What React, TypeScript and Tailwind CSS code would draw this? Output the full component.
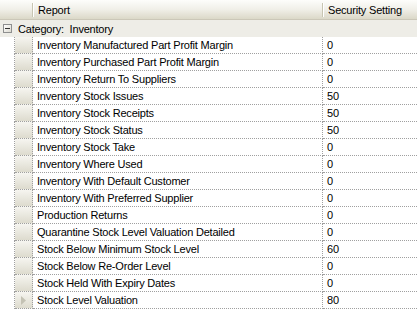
import React from "react";

type Row = { name: string; value: string };

const rows: Row[] = [
  { name: "Inventory Manufactured Part Profit Margin", value: "0" },
  { name: "Inventory Purchased Part Profit Margin", value: "0" },
  { name: "Inventory Return To Suppliers", value: "0" },
  { name: "Inventory Stock Issues", value: "50" },
  { name: "Inventory Stock Receipts", value: "50" },
  { name: "Inventory Stock Status", value: "50" },
  { name: "Inventory Stock Take", value: "0" },
  { name: "Inventory Where Used", value: "0" },
  { name: "Inventory With Default Customer", value: "0" },
  { name: "Inventory With Preferred Supplier", value: "0" },
  { name: "Production Returns", value: "0" },
  { name: "Quarantine Stock Level Valuation Detailed", value: "0" },
  { name: "Stock Below Minimum Stock Level", value: "60" },
  { name: "Stock Below Re-Order Level", value: "0" },
  { name: "Stock Held With Expiry Dates", value: "0" },
  { name: "Stock Level Valuation", value: "80" },
];

function HeaderDivider() {
  return (
    <div className="flex h-[14px] self-center">
      <div className="w-px bg-[#c7c5b2]" />
      <div className="w-px bg-white" />
    </div>
  );
}

export default function App() {
  return (
    <div
      className="w-[417px] h-[310px] overflow-hidden bg-white text-[11px] tracking-[-0.2px] text-black"
      style={{ fontFamily: '"Liberation Sans", Arial, sans-serif' }}
    >
      {/* column headers */}
      <div className="flex h-[20px] bg-gradient-to-b from-[#fdfdfb] via-[#f0efe8] to-[#dbd8c8] border-b border-[#cbc7b8]">
        <div className="w-[32px]" />
        <HeaderDivider />
        <div className="w-[288px] flex items-center pl-[4px] pt-px">Report</div>
        <HeaderDivider />
        <div className="flex-1 flex items-center pl-[4px] pt-px">Security Setting</div>
      </div>

      {/* category row */}
      <div className="flex items-center h-[17px] bg-[#eeede7]">
        <div className="ml-[3px] w-[9px] h-[9px] border border-[#8e8f8f] bg-gradient-to-br from-white to-[#dcdad0] flex items-center justify-center">
          <div className="w-[5px] h-px bg-[#333]" />
        </div>
        <div className="ml-[6px] pt-px whitespace-pre">Category:  Inventory</div>
      </div>

      {/* data rows */}
      {rows.map((r, i) => (
        <div key={r.name} className="flex h-[17px]">
          <div className="w-[15px] border-r border-dotted border-[#a0a0a0]" />
          <div className="w-[18px] border-r border-b border-dotted border-[#a0a0a0] bg-gradient-to-b from-[#f6f5f0] to-[#dddbce] flex items-center justify-center">
            {i === rows.length - 1 && (
              <svg width="5" height="9" viewBox="0 0 5 9">
                <path d="M0 0 L5 4.5 L0 9 Z" fill="#c4c2b4" />
              </svg>
            )}
          </div>
          <div className="w-[290px] border-r border-b border-dotted border-[#a0a0a0] flex items-center pl-[4px] pt-px whitespace-nowrap">
            {r.name}
          </div>
          <div className="flex-1 border-b border-dotted border-[#a0a0a0] flex items-center pl-[4px] pt-px">
            {r.value}
          </div>
        </div>
      ))}
    </div>
  );
}
